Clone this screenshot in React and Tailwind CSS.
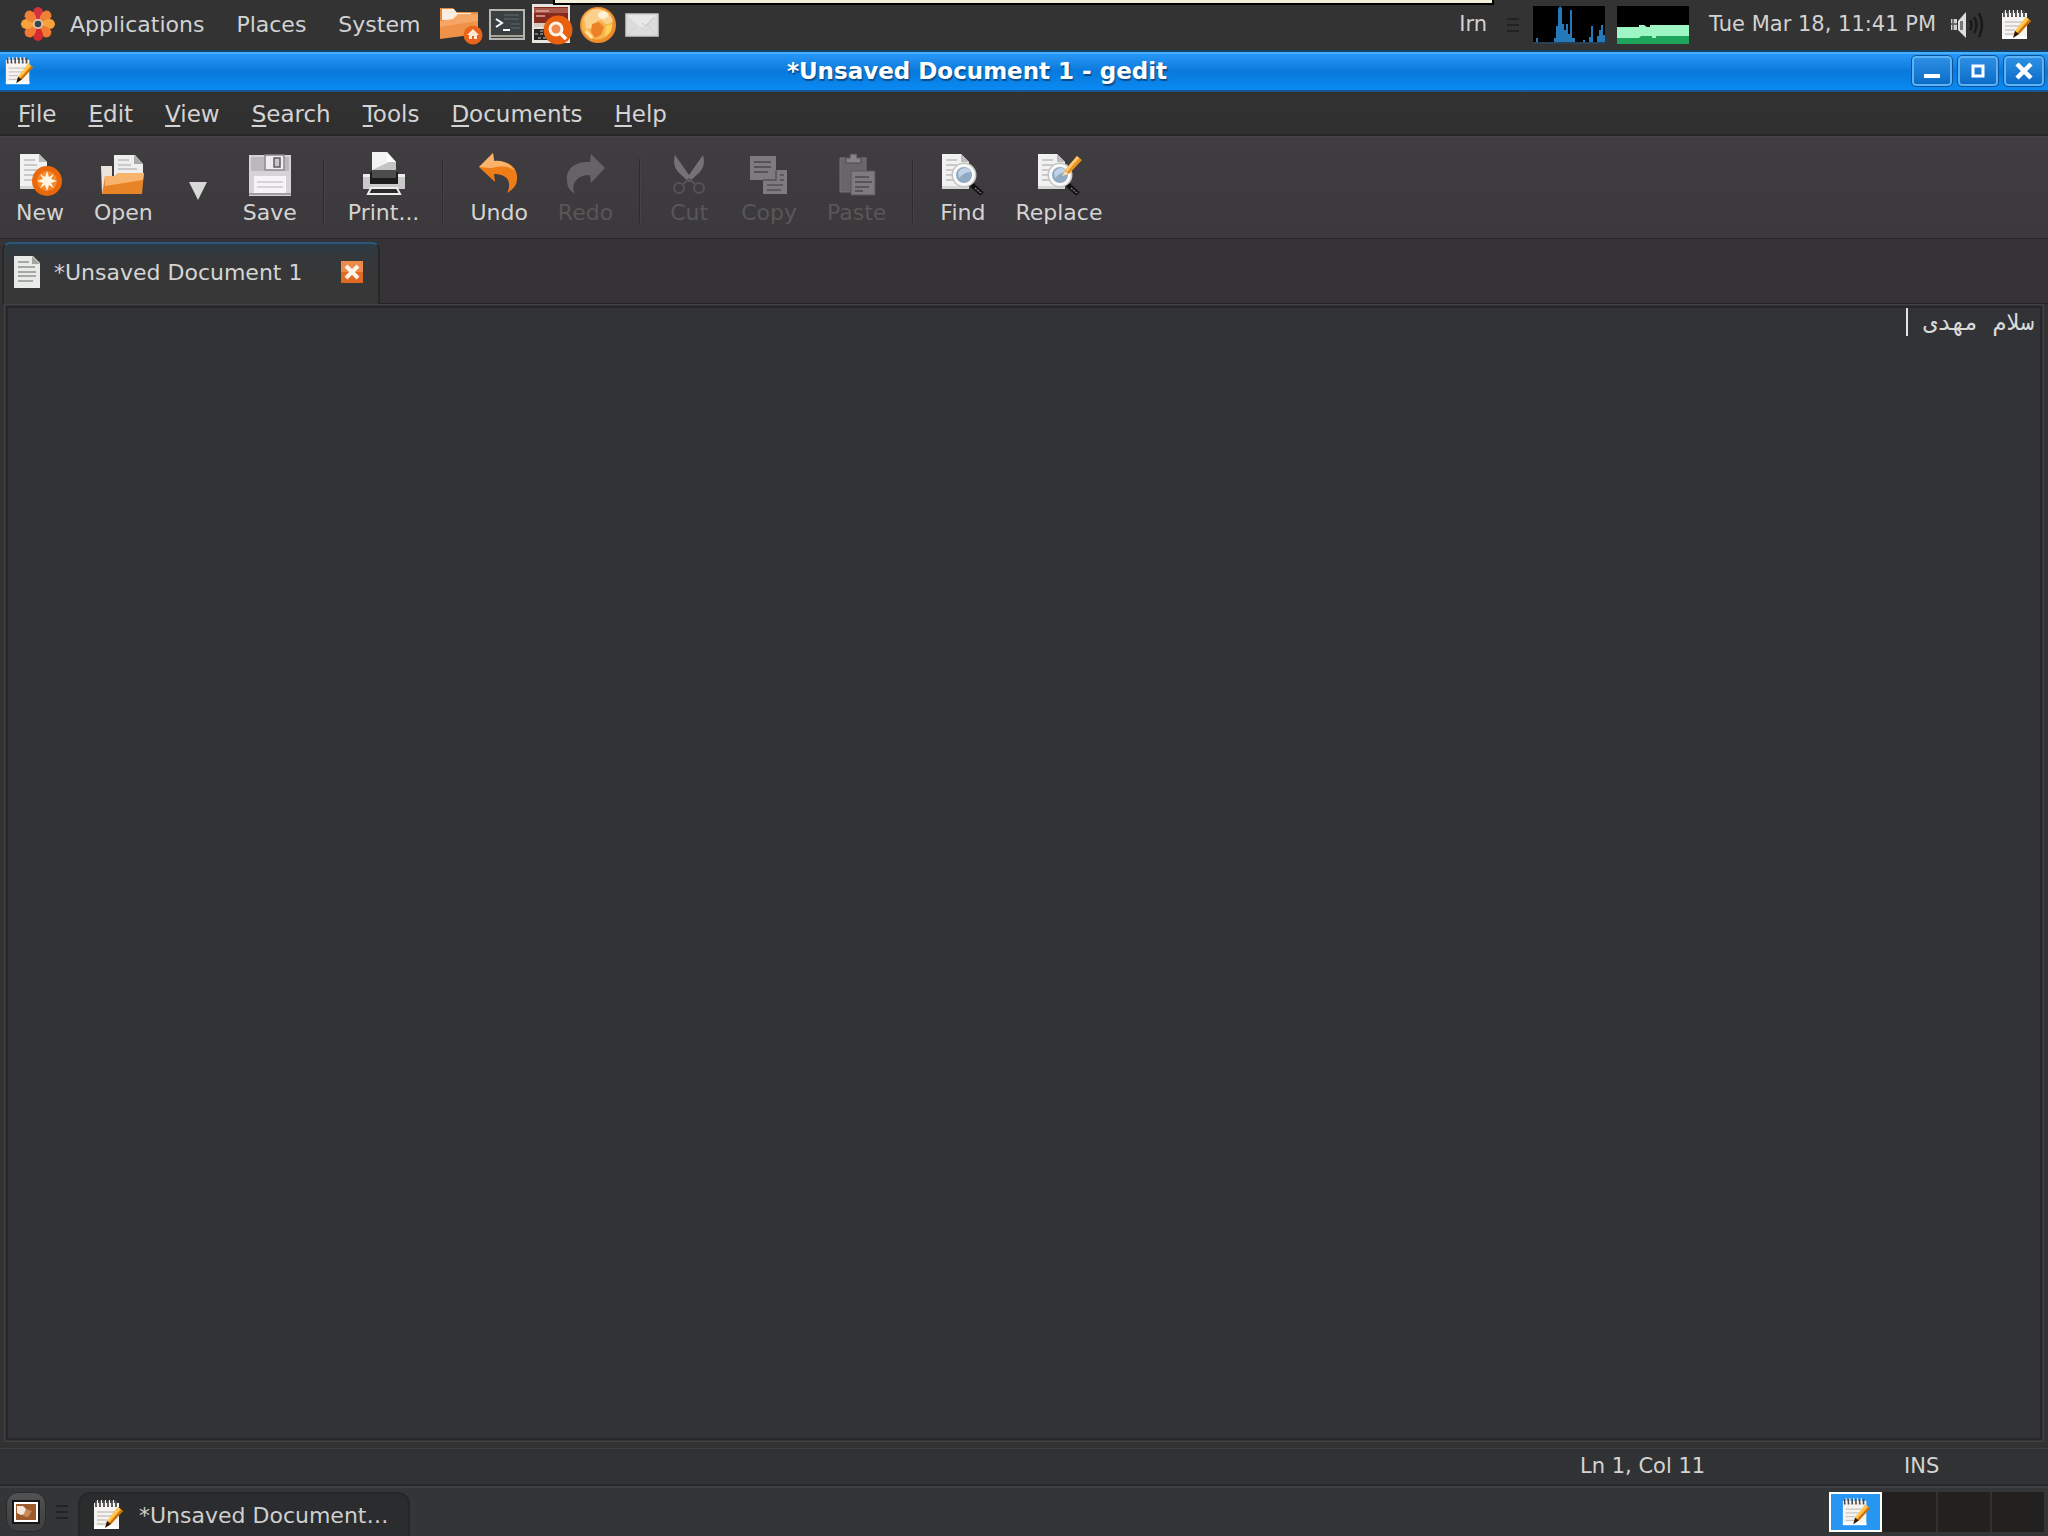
import { useState } from "react";

const MENUS = ["File", "Edit", "View", "Search", "Tools", "Documents", "Help"];

/* ---------- icons ---------- */

function GeditIcon({ className }) {
    return (
        <svg viewBox="0 0 32 32" className={className} aria-hidden="true">
            <path d="M2 4h25v26H2z" fill="#f6f4f1" />
            <path d="M2 27h25v3H2z" fill="#fff" />
            <path d="M5 13h17M5 17h15M5 21h10M5 25h9" stroke="#c9c5c2" strokeWidth="1.3" />
            <path d="M4 2v6M8 2v6M12 2v6M16 2v6M20 2v6M24 2v6" stroke="#4a4a4a" strokeWidth="1.8" />
            <path d="M5.5 1v5M9.500 1v5M13.500 1v5M17.500 1v5M21.500 1v5" stroke="#f2f2f2" strokeWidth="1.2" />
            <path d="M26 8l5 4-12 13-5 3 1-6z" fill="#f5a21c" />
            <path d="M26 8l2.500 2L17 23l-2-1z" fill="#ffc95a" />
            <path d="M31 12l-12 13-1.500-1L29.500 10.800z" fill="#c66a08" />
            <path d="M15 22l4 3-6 4z" fill="#2a1606" />
        </svg>
    );
}

function FlowerIcon() {
    return (
        <svg viewBox="0 0 36 36" className="h-9 w-9" aria-hidden="true">
            {[0, 45, 90, 135, 180, 225, 270, 315].map((a, i) => (
                <path
                    key={a}
                    d="M18 16C13 11 12 7 14 3Q18-1 22 3C24 7 23 11 18 16z"
                    transform={`rotate(${a} 18 18)`}
                    fill={["#d5333b", "#f08038", "#f9a13a", "#f27a33", "#d42b2e", "#f27a33", "#f9a13a", "#f08038"][i]}
                />
            ))}
            <circle cx="18" cy="18" r="5" fill="#d9cdb9" />
            <circle cx="18" cy="18" r="3.300" fill="#3b4148" />
        </svg>
    );
}

function HomeFolderIcon() {
    return (
        <svg viewBox="0 0 44 40" className="h-10 w-11" aria-hidden="true">
            <path d="M1 3h13l3 4h22v24H1z" fill="#e58a3c" />
            <path d="M3 4h12l3 4h14v7H3z" fill="#fbeede" />
            <path d="M1 16l13-2 5-5h20v20L1 33z" fill="#f6a664" />
            <path d="M1 22l38-6v13L1 34z" fill="#f09148" />
            <circle cx="34" cy="30" r="9.500" fill="#e8651b" />
            <path d="M34 24l-6 6h2v4h3v-3h2v3h3v-4h2z" fill="#ffe8d6" />
        </svg>
    );
}

function TerminalIcon() {
    return (
        <svg viewBox="0 0 36 34" className="h-[34px] w-9" aria-hidden="true">
            <path d="M1 2h34v29H1z" fill="#3c3f3c" stroke="#b5b6b1" strokeWidth="2" />
            <path d="M4 5h28v20H4z" fill="#3a4145" />
            <path d="M15 7h15M15 11h15M22 16h9M22 20h9" stroke="#606a6c" strokeWidth="1" />
            <path d="M2 28h32" stroke="#a3a496" strokeWidth="2" />
            <path d="M7 11l6 4-6 4M14 22h7" fill="none" stroke="#fff" strokeWidth="2" />
        </svg>
    );
}

function SearchToolIcon() {
    return (
        <svg viewBox="0 0 42 44" className="h-11 w-[42px]" aria-hidden="true">
            <path d="M1 1h38v39H1z" fill="#e8e4df" />
            <path d="M3 4h34v16H3z" fill="#862a1f" />
            <path d="M3 5h34v5H3z" fill="#a8594b" />
            <path d="M5 8h13M5 13h9" stroke="#dba79b" strokeWidth="1.500" />
            <path d="M3 20h16v4H3z" fill="#d7c8bd" />
            <path d="M3 26h20v11H3z" fill="#242424" />
            <path d="M4 31h12M7 35h11M9 28h4" stroke="#91918e" strokeWidth="1.500" strokeDasharray="3 2" />
            <circle cx="27" cy="27" r="14.500" fill="#e9600e" />
            <circle cx="25" cy="26" r="6" fill="#ef8a4c" stroke="#fff3e8" strokeWidth="3" />
            <path d="M30 31l5 5" stroke="#fff" strokeWidth="3.500" />
        </svg>
    );
}

function GlobeIcon() {
    return (
        <svg viewBox="0 0 38 38" className="h-[38px] w-[38px]" aria-hidden="true">
            <circle cx="19" cy="19" r="18" fill="#ef8d2b" />
            <circle cx="18" cy="18" r="15.500" fill="#f8b552" />
            <path d="M5 12Q10 3 19 3q12 1 15 12-5 5-9 2-2-5-7-2l-5 7-6 1z" fill="#fbd28d" />
            <path d="M13 18l7-2 5 5-3 8-6 3-4-6z" fill="#ec8329" />
            <path d="M27 20l6-2-1 7-6 6z" fill="#ffd353" />
            <path d="M7 25l6 7" stroke="#ffe29c" strokeWidth="3" />
            <ellipse cx="24" cy="9" rx="5" ry="4" fill="#fff1d4" />
        </svg>
    );
}

function MailIcon() {
    return (
        <svg viewBox="0 0 34 24" className="h-6 w-[34px]" aria-hidden="true">
            <path d="M1 1h32v22H1z" fill="#dcdcdc" stroke="#cacaca" strokeWidth="1.500" />
            <path d="M2 22l11-10M32 22L22 11" stroke="#cfcfcf" />
            <path d="M2 2l12 11q3 2 6 0L32 2z" fill="#e8e8e8" />
            <path d="M17 10l4 3 8-9" fill="none" stroke="#c4c4c4" />
        </svg>
    );
}

function CpuGraph() {
    return (
        <svg viewBox="0 0 72 38" className="h-[38px] w-[72px]" aria-label="Processor load">
            <path d="M0 0h72v38H0z" fill="#000" />
            <path
                d="M0 38v-2h3v-4h2v4h16v-4h2V20h2V3l2-3 2 2v16h2v6h2v-6h2v10h2V4h2v28h3v4h8v-2h2v2h4v-5h2V20h2v16h4v-6h2v-6h2v-5h2v10h2v9z"
                fill="#2379b9"
            />
            <path d="M0 36h72v2H0z" fill="#2c4054" />
        </svg>
    );
}

function MemoryGraph() {
    return (
        <svg viewBox="0 0 72 38" className="h-[38px] w-[72px]" aria-label="Memory use">
            <path d="M0 0h72v38H0z" fill="#000" />
            <path d="M0 21h22v-2h5l3 2h3v-2h39v19H0z" fill="#9ff6c5" />
            <path d="M0 32h22l2-2h11v2h4v-2h33v8H0z" fill="#1fa45b" />
        </svg>
    );
}

function VolumeIcon() {
    return (
        <svg viewBox="0 0 34 28" className="h-7 w-[34px]" aria-hidden="true">
            <path d="M1 8h6v11H1z" fill="#cfcfcf" />
            <path d="M3 8v11M1 13h6" stroke="#555" strokeWidth="1.500" />
            <path d="M8 10l8-9v26l-8-8z" fill="#dedede" />
            <path d="M10 10h3v9h-3z" fill="#777" />
            <path d="M20 9q3 5 0 10M24 6q5 8 0 16M29 2q6 12 0 24" fill="none" stroke="#191919" strokeWidth="2.500" />
        </svg>
    );
}

function Page({ x = 0, y = 0 }) {
    return (
        <g transform={`translate(${x} ${y})`}>
            <path d="M0 0h19l8 8v27H0z" fill="#f1f1f1" />
            <path d="M0 32h27v3H0z" fill="#d5d5d5" />
            <path d="M4 6h11M4 11h13M4 16h17M4 21h17M4 26h14" stroke="#bcbcbc" strokeWidth="1.300" />
            <path d="M19 0v8h8z" fill="#bcbcbc" />
        </g>
    );
}

function Lens() {
    return (
        <>
            <path d="M30 31l11 10" stroke="#101010" strokeWidth="5" />
            <path d="M34 35l6 5" stroke="#8a8a8a" strokeWidth="1.200" strokeDasharray="2 1" />
            <circle cx="23" cy="22" r="12.500" fill="#c4c4c1" />
            <circle cx="23" cy="22" r="11" fill="#fafafa" />
            <circle cx="23" cy="22" r="8" fill="#91a9c3" />
            <path d="M17 20q2-5 8-5 4 1 5 4-7 0-12 6z" fill="#c2d3e5" />
        </>
    );
}

const TOOL_ICONS = {
    New: (
        <>
            <Page x={2} y={1} />
            <circle cx="29" cy="28" r="15" fill="#e9680c" />
            <circle cx="29" cy="28" r="10" fill="#f58a2c" />
            <path d="M29 18l2 6 5-3-3 5 6 2-6 2 3 5-5-3-2 6-2-6-5 3 3-5-6-2 6-2-3-5 5 3z" fill="#fff5e3" />
        </>
    ),
    Open: (
        <>
            <path d="M0 13h11v28H1z" fill="#ece5de" />
            <path d="M13 2h21l8 9v19H13z" fill="#eee" />
            <path d="M17 7h11M17 12h13M17 16h19" stroke="#bdbdbd" strokeWidth="1.500" />
            <path d="M33 2v9h9z" fill="#a9a9a9" />
            <path d="M1 41l3-18h10l3-3h26l-2 21z" fill="#e68427" />
            <path d="M4 23h10l3-3h26l-1 7-38 6z" fill="#f8b46c" />
        </>
    ),
    Save: (
        <>
            <path d="M1 2h42v41H1z" fill="#d7d2d8" />
            <path d="M3 4h13v14H3zM37 4h4v14h-4z" fill="#bcb8be" />
            <path d="M17 2h19v15H17z" fill="#efedf0" stroke="#88868b" strokeWidth="1.500" />
            <path d="M26 5h6v9h-6z" fill="#c8c5ca" stroke="#5d5b60" strokeWidth="1.500" />
            <path d="M6 23h32v17H6z" fill="#f7f3f7" />
            <path d="M9 29h26M9 34h26" stroke="#cfc9d1" strokeWidth="1.300" />
            <path d="M1 41h42" stroke="#a39ba5" strokeWidth="2" />
        </>
    ),
    "Print...": (
        <>
            <path d="M1 21h42v15H1z" fill="#c9c9c9" />
            <path d="M1 21h42v3H1z" fill="#ededed" />
            <path d="M8 19h28v12H8z" fill="#1c1c1c" />
            <path d="M10-1h15l9 10v16H10z" fill="#c4c4c4" />
            <path d="M10-1h15l2 10-17 8z" fill="#f3f3f3" />
            <path d="M10 17h24v8H10z" fill="#4c4c4c" />
            <path d="M25-1v10h9z" fill="#fff" />
            <path d="M9 35l-3 6h32l-3-6z" fill="#2b2b2b" stroke="#eee" strokeWidth="2" />
        </>
    ),
    Undo: (
        <>
            <path d="M2 14L16 0l1 8c14-1 24 6 23 18 0 7-5 11-10 14 4-7 4-19-13-19l1 8z" fill="#ef7d17" />
            <path d="M2 14L16 0l1 8c9-1 17 3 21 10-7-6-15-5-24-3z" fill="#fbb36c" />
        </>
    ),
    Redo: (
        <path d="M42 15L28 1l-1 8C13 8 3 15 4 27c0 7 3 11 8 14-4-7-1-19 15-19l1 8z" fill="#656365" />
    ),
    Cut: (
        <>
            <path d="M8 2q-3 10 3 17l11 10 11-10q6-7 3-17L22 22z" fill="#747274" />
            <circle cx="12" cy="35" r="5" fill="none" stroke="#555355" strokeWidth="2" />
            <circle cx="32" cy="35" r="5" fill="none" stroke="#555355" strokeWidth="2" />
            <path d="M16 31l6-5 6 5" fill="none" stroke="#555355" strokeWidth="2" />
        </>
    ),
    Copy: (
        <>
            <path d="M3 3h26v24H3z" fill="#7d7b7d" />
            <path d="M7 9h17M7 14h17M7 19h14" stroke="#555355" strokeWidth="2" />
            <path d="M16 41V28l14-11h10v24z" fill="#7d7b7d" />
            <path d="M29 17v10H16" fill="none" stroke="#555355" strokeWidth="1.500" />
            <path d="M20 32h16M20 37h14M33 22h4M33 27h4" stroke="#5c5a5c" strokeWidth="2" />
        </>
    ),
    Paste: (
        <>
            <path d="M5 5h26v34H5z" fill="#686668" stroke="#777577" />
            <path d="M11 10V5h4V1h7v4h4v5z" fill="#858385" stroke="#4c4a4c" />
            <path d="M16 18h24v24H16z" fill="#7d7b7d" stroke="#59575a" />
            <path d="M20 24h14M20 29h17M20 34h14M20 38h8" stroke="#575557" strokeWidth="2" />
        </>
    ),
    Find: (
        <>
            <Page x={1} y={1} />
            <Lens />
        </>
    ),
    Replace: (
        <>
            <Page x={1} y={1} />
            <Lens />
            <path d="M28 17L40 3l5 4-13 14-6 2z" fill="#e99420" />
            <path d="M28 17L40 3l2 2-12 14z" fill="#ffc874" />
            <path d="M28 18l4 3-7 2z" fill="#f6dcb4" />
        </>
    ),
};

/* ---------- small pieces ---------- */

function Handle() {
    return (
        <span className="flex w-3 flex-col gap-1" aria-hidden="true">
            <i className="h-0.5 bg-[#222]" />
            <i className="h-0.5 bg-[#222]" />
            <i className="h-0.5 bg-[#222]" />
        </span>
    );
}

function ToolButton({ label, disabled, pad = "px-[15px]" }) {
    return (
        <button
            disabled={disabled}
            className={`flex flex-col items-center ${pad} ${disabled ? "text-[#585658]" : "text-[#d4d4d4]"}`}
        >
            <svg viewBox="0 0 44 44" className="h-11 w-11 overflow-visible" aria-hidden="true">
                {TOOL_ICONS[label]}
            </svg>
            <span className="text-[22px] leading-8">{label}</span>
        </button>
    );
}

function Separator() {
    return <div className="mx-[11px] h-16 w-0.5 border-l border-[#2c2a2c] bg-[#454345]" />;
}

function WindowButton({ label, children }) {
    return (
        <button
            aria-label={label}
            className="flex h-[30px] w-10 items-center justify-center rounded-sm border-2 border-[#5bb2f5] bg-linear-to-b from-[#2b8fe3] to-[#0b6cc8] outline outline-[#0a5299]"
        >
            <svg viewBox="0 0 20 20" className="h-5 w-5" aria-hidden="true">
                {children}
            </svg>
        </button>
    );
}

/* ---------- desktop bars ---------- */

function TopPanel() {
    return (
        <header className="relative flex h-[50px] shrink-0 items-center bg-[#333333] text-[22px] text-[#d2d2d2]">
            <nav className="flex items-center pb-0.5 pl-5" aria-label="Panel">
                <FlowerIcon />
                <button className="pl-3.5 pr-4">Applications</button>
                <button className="px-4">Places</button>
                <button className="pl-4 pr-[19px]">System</button>
            </nav>
            <div className="flex items-center gap-1.5 pb-px">
                <button aria-label="Home folder"><HomeFolderIcon /></button>
                <button aria-label="Terminal"><TerminalIcon /></button>
                <button aria-label="Search for files"><SearchToolIcon /></button>
                <button aria-label="Web browser"><GlobeIcon /></button>
                <button aria-label="Mail" className="pl-0.5"><MailIcon /></button>
            </div>
            {/* bottom edge of a panel tooltip */}
            <div className="absolute left-[553px] right-[554px] top-0 h-[5px] border-2 border-t-0 border-black bg-[#f0f0dc]" />
            <div className="ml-auto flex items-center pb-px pr-4">
                <button className="pr-5 text-[21px]">Irn</button>
                <Handle />
                <div className="ml-3.5 flex gap-3">
                    <CpuGraph />
                    <MemoryGraph />
                </div>
                <time className="ml-5 text-[21px]">Tue Mar 18, 11:41 PM</time>
                <button aria-label="Volume" className="ml-3.5"><VolumeIcon /></button>
                <button aria-label="gedit" className="ml-4"><GeditIcon className="h-8 w-8" /></button>
            </div>
        </header>
    );
}

function TitleBar() {
    return (
        <div className="flex h-[42px] shrink-0 items-center border-b-2 border-t-2 border-b-[#17558c] border-t-[#12436d] bg-linear-to-b from-[#2a9bfb] via-[#0879db] to-[#0a8af2] px-1 shadow-[inset_0_2px_0_#4aaeff]">
            <GeditIcon className="h-[30px] w-[30px]" />
            <h1 className="flex-1 pl-2 text-center text-[23px] font-bold leading-8 text-white [text-shadow:1px_2px_1px_#0b4a86]">
                *Unsaved Document 1 - gedit
            </h1>
            <div className="flex gap-1.5">
                <WindowButton label="Minimize">
                    <path d="M2 13h16v4H2z" fill="#fff" />
                </WindowButton>
                <WindowButton label="Maximize">
                    <path d="M5 5h10v10H5z" fill="none" stroke="#fff" strokeWidth="3" />
                </WindowButton>
                <WindowButton label="Close">
                    <path d="M3 3l14 14M17 3L3 17" stroke="#fff" strokeWidth="4.500" />
                </WindowButton>
            </div>
        </div>
    );
}

function BottomPanel() {
    return (
        <footer className="flex h-[50px] shrink-0 items-center border-t-2 border-[#3e3f40] bg-[#343536]">
            <button
                aria-label="Show desktop"
                className="ml-1.5 flex h-10 w-10 items-center justify-center rounded-xl border border-[#2a2a2a] bg-linear-to-b from-[#515253] to-[#3d3e3f]"
            >
                <svg viewBox="0 0 28 24" className="h-6 w-7" aria-hidden="true">
                    <path d="M2 2h24v20H2z" fill="#a4622d" stroke="#161616" strokeWidth="4" />
                    <path d="M3 3h22v18H3z" fill="#9d5b2c" stroke="#fff" strokeWidth="2" />
                    <path d="M5 6h6l3 3v5l-5 1-4-2z" fill="#f4e6da" />
                    <path d="M14 9l6 2-4 6-5-1z" fill="#c98a55" />
                </svg>
            </button>
            <span className="ml-2.5 mr-2.5"><Handle /></span>
            <button className="flex h-11 w-[332px] items-center gap-[15px] self-end rounded-t-xl border-2 border-b-0 border-[#262728] bg-[#2b2c2d] pl-3 text-[22px] text-[#cfcfcf]">
                <GeditIcon className="h-8 w-8" />
                <span>*Unsaved Document…</span>
            </button>
            <div className="ml-auto mr-1 flex h-10 bg-[#222120]">
                <button
                    aria-label="Workspace 1"
                    className="flex h-10 w-[53px] items-center justify-center border-2 border-white bg-[#2795f2]"
                >
                    <GeditIcon className="h-[30px] w-[30px]" />
                </button>
                <button aria-label="Workspace 2" className="w-[54px]" />
                <button aria-label="Workspace 3" className="w-[54px] border-l-2 border-[#313131]" />
                <button aria-label="Workspace 4" className="w-[54px] border-l-2 border-[#313131]" />
            </div>
        </footer>
    );
}

export default function App() {
    const [text, setText] = useState("سلام مهدی ");

    return (
        <div className="flex min-h-screen flex-col bg-[#333233] font-['DejaVu_Sans',sans-serif] text-[22px] text-[#d4d4d4]">
            <TopPanel />

            <main className="flex flex-1 flex-col">
                <TitleBar />

                <nav className="flex h-11 shrink-0 items-center gap-8 border-b-2 border-[#272627] bg-linear-to-b from-[#323232] to-[#302f30] pl-[18px] pt-0.5 text-[23px]" aria-label="Menu">
                    {MENUS.map((m) => (
                        <button key={m}>
                            <span className="underline decoration-2 underline-offset-3">{m[0]}</span>
                            {m.slice(1)}
                        </button>
                    ))}
                </nav>

                <div className="flex h-[103px] shrink-0 items-center border-b border-t border-b-[#2a292a] border-t-[#454445] bg-linear-to-b from-[#3f3d3f] to-[#3b393b] pl-px pt-1.5">
                    <ToolButton label="New" />
                    <ToolButton label="Open" />
                    <button aria-label="Open recent" className="px-[21px]">
                        <svg viewBox="0 0 18 18" className="h-[18px] w-[18px]" aria-hidden="true">
                            <path d="M0 0h18L9 18z" fill="#d8d8d8" />
                        </svg>
                    </button>
                    <ToolButton label="Save" />
                    <Separator />
                    <ToolButton label="Print..." pad="px-3" />
                    <Separator />
                    <ToolButton label="Undo" />
                    <ToolButton label="Redo" disabled />
                    <Separator />
                    <ToolButton label="Cut" disabled />
                    <ToolButton label="Copy" disabled />
                    <ToolButton label="Paste" disabled />
                    <Separator />
                    <ToolButton label="Find" />
                    <ToolButton label="Replace" />
                </div>

                <div className="flex h-[65px] shrink-0 items-end bg-[#353335] pl-0.5" role="tablist">
                    <div className="flex h-[62px] w-[378px] items-center rounded-t-lg border-2 border-b-0 border-[#292829] border-t-[#28567c] bg-linear-to-b from-[#2d3a43] via-[#363738] via-30% to-[#383738] pb-1 pl-2.5 pr-3.5">
                        <svg viewBox="0 0 26 32" className="h-8 w-[26px]" aria-hidden="true">
                            <path d="M0 0h19l7 7v25H0z" fill="#e9ebe8" />
                            <path d="M4 6h11M4 11h17M4 16h18M4 20h18M4 25h15" stroke="#8f928e" strokeWidth="1.500" />
                            <path d="M18 0v8h8z" fill="#a2a5a1" />
                        </svg>
                        <button role="tab" aria-selected="true" className="ml-3.5">*Unsaved Document 1</button>
                        <button aria-label="Close tab" className="ml-auto">
                            <svg viewBox="0 0 24 24" className="h-6 w-6" aria-hidden="true">
                                <path d="M1 1h22v22H1z" fill="#e06a24" />
                                <path d="M1 1h22v11H1z" fill="#ec8a4c" />
                                <path d="M6 6l12 12M18 6L6 18" stroke="#fff4e8" strokeWidth="4" />
                            </svg>
                        </button>
                    </div>
                    <div className="flex-1 border-b border-[#222]" />
                </div>

                <div className="mx-1 flex flex-1 flex-col border border-[#444445] bg-[#323337]">
                    <div className="relative m-px flex flex-1 border-2 border-[#27272a]">
                        <textarea
                            dir="rtl"
                            aria-label="Document"
                            value={text}
                            onChange={(e) => setText(e.target.value)}
                            className="flex-1 resize-none bg-transparent px-1.5 font-['DejaVu_Sans_Mono',monospace] text-[23px] leading-7 text-[#d9d9d9] outline-none"
                        />
                        <span className="absolute right-[132px] top-0 h-7 w-0.5 bg-[#e4e4e4]" />
                    </div>
                </div>

                <div className="mt-1.5 flex h-[38px] shrink-0 items-center justify-end border-b-2 border-t border-b-[#262728] border-t-[#3e3f40] bg-[#313233] text-[21px]">
                    <span className="w-[324px]">Ln 1, Col 11</span>
                    <span className="w-36">INS</span>
                </div>
            </main>

            <BottomPanel />
        </div>
    );
}
